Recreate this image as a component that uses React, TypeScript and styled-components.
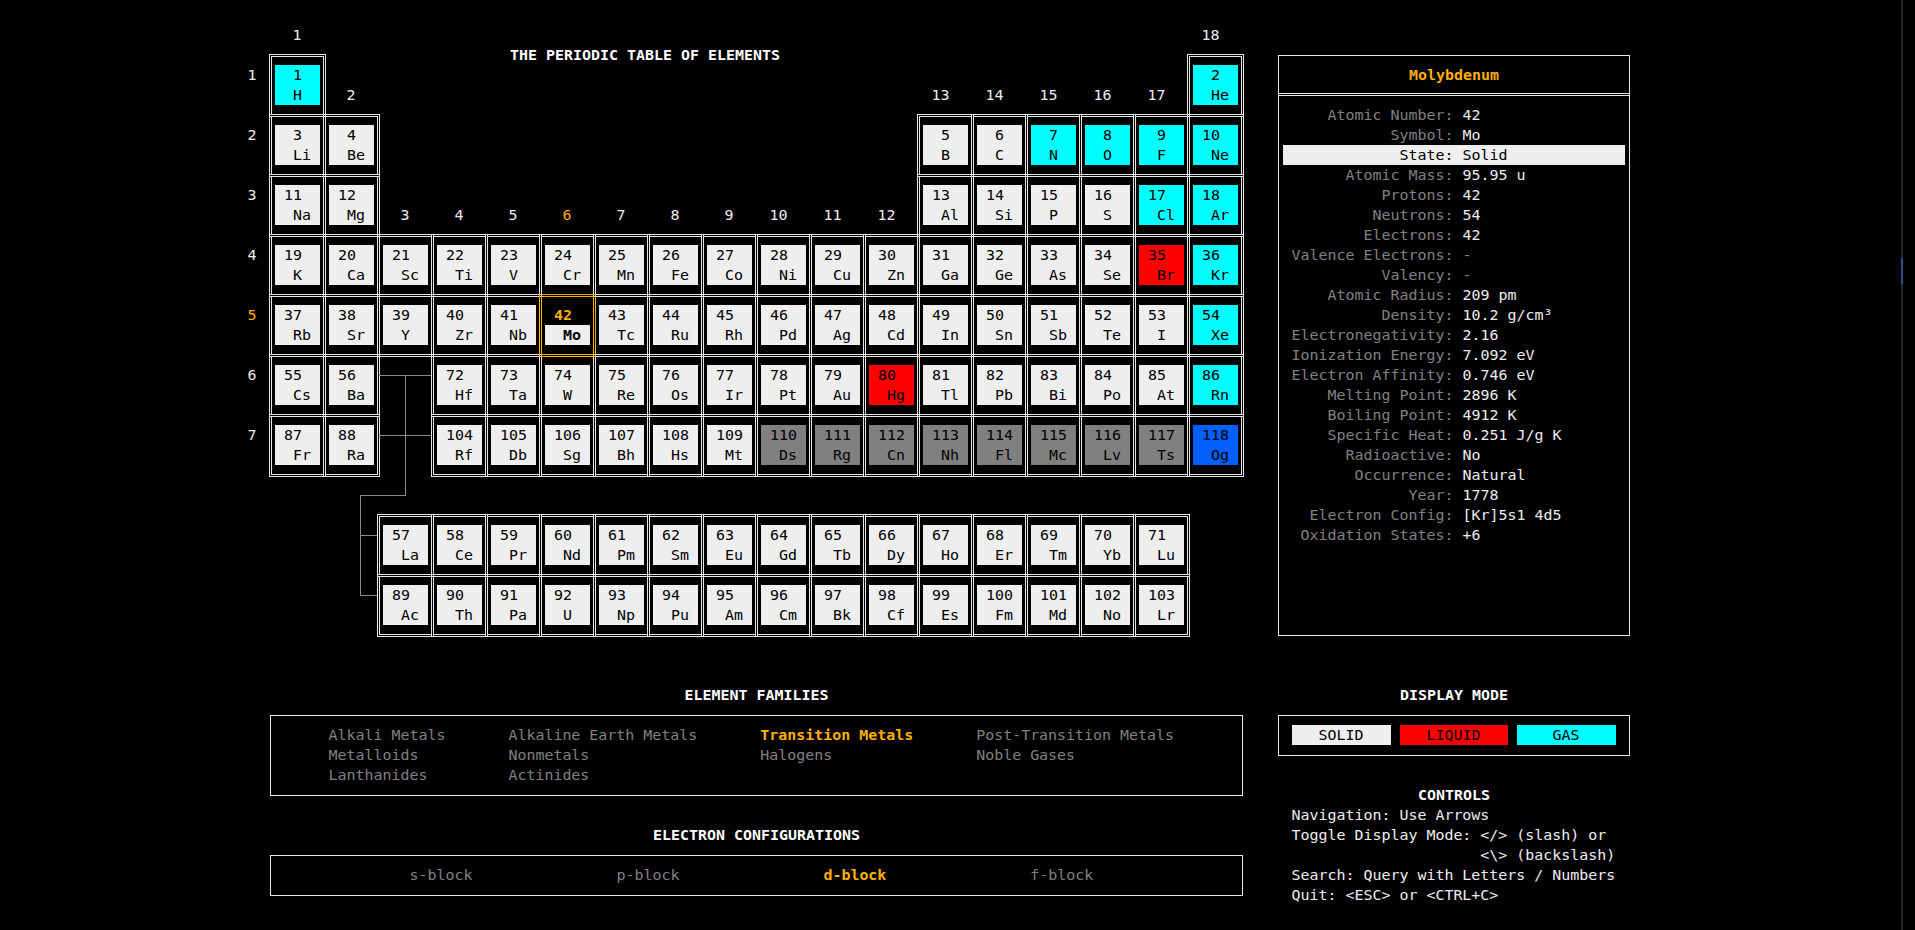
import React from "react";
import styled, { createGlobalStyle } from "styled-components";

const FG = "#eeeeee";
const DIM = "#808080";
const ACCENT = "#ffaf00";
const LINE = "#e6e6e6";
const WIRE = "#8a8a8a";

const SOLID_BG = "#eeeeee";
const GAS_BG = "#00ffff";
const LIQUID_BG = "#ff0000";
const UNKNOWN_BG = "#808080";
const OG_BG = "#005fff";

const GlobalStyle = createGlobalStyle`
  html, body {
    margin: 0;
    padding: 0;
    background: #000;
  }
  body {
    font-family: "DejaVu Sans Mono", "Liberation Mono", monospace;
    font-size: 14.95px;
    line-height: 20px;
    color: ${FG};
  }
`;

const SYMBOLS = (
  "H He Li Be B C N O F Ne Na Mg Al Si P S Cl Ar K Ca Sc Ti V Cr Mn Fe Co Ni Cu Zn Ga Ge As Se Br Kr " +
  "Rb Sr Y Zr Nb Mo Tc Ru Rh Pd Ag Cd In Sn Sb Te I Xe Cs Ba La Ce Pr Nd Pm Sm Eu Gd Tb Dy Ho Er Tm Yb Lu " +
  "Hf Ta W Re Os Ir Pt Au Hg Tl Pb Bi Po At Rn Fr Ra Ac Th Pa U Np Pu Am Cm Bk Cf Es Fm Md No Lr " +
  "Rf Db Sg Bh Hs Mt Ds Rg Cn Nh Fl Mc Lv Ts Og"
).split(" ");

const GASES = [1, 2, 7, 8, 9, 10, 17, 18, 36, 54, 86];
const LIQUIDS = [35, 80];
const SELECTED = 42;

// grid rows: 1 = header, 2..8 = periods 1..7, 9 = spacer, 10 = lanthanides, 11 = actinides
function place(n: number): { group: number; row: number } {
  if (n >= 57 && n <= 71) return { group: n - 57 + 3, row: 10 };
  if (n >= 89 && n <= 103) return { group: n - 89 + 3, row: 11 };
  if (n <= 2) return { group: n === 1 ? 1 : 18, row: 2 };
  if (n <= 18) {
    const start = n <= 10 ? 3 : 11;
    const i = n - start;
    return { group: i < 2 ? i + 1 : i + 11, row: n <= 10 ? 3 : 4 };
  }
  if (n <= 54) {
    const start = n <= 36 ? 19 : 37;
    return { group: n - start + 1, row: n <= 36 ? 5 : 6 };
  }
  const start = n <= 86 ? 55 : 87;
  const i = n - start;
  return { group: i < 2 ? i + 1 : i - 13, row: n <= 86 ? 7 : 8 };
}

function tileColor(n: number) {
  if (n === 118) return OG_BG;
  if (n >= 110) return UNKNOWN_BG;
  if (GASES.includes(n)) return GAS_BG;
  if (LIQUIDS.includes(n)) return LIQUID_BG;
  return SOLID_BG;
}

const padFloor = (s: string, w: number) => " ".repeat(Math.floor((w - s.length) / 2)) + s;
const padCeil = (s: string, w: number) => " ".repeat(Math.ceil((w - s.length) / 2)) + s;

const GROUP_ROW: Record<number, number> = { 1: 1, 18: 1, 2: 2, 13: 2, 14: 2, 15: 2, 16: 2, 17: 2 };

const Screen = styled.div`
  width: 1915px;
  height: 930px;
  overflow: hidden;
  display: flex;
  background: #000;
`;

const Workspace = styled.main`
  display: flex;
  align-items: flex-start;
  gap: 34px;
  padding: 25px 0 0 247px;
`;

const LeftColumn = styled.div`
  display: flex;
  flex-direction: column;
`;

const RightColumn = styled.aside`
  display: flex;
  flex-direction: column;
  width: 352px;
  margin-top: 30px;
`;

const TableGrid = styled.div`
  position: relative;
  display: grid;
  grid-template-columns: 22px repeat(18, 54px) 3px;
  grid-template-rows: 29px repeat(7, 60px) 40px 60px 60px 3px;
`;

const Cell = styled.div<{ $col: number; $row: number; $selected?: boolean }>`
  grid-column: ${(p) => p.$col};
  grid-row: ${(p) => p.$row};
  width: 57px;
  height: 63px;
  box-sizing: border-box;
  border: 3px double ${(p) => (p.$selected ? ACCENT : LINE)};
  padding: 8px 0 0 3px;
  z-index: ${(p) => (p.$selected ? 1 : 0)};
`;

const Tile = styled.div<{ $bg: string }>`
  width: 45px;
  height: 40px;
  background: ${(p) => p.$bg};
  color: #000;
  white-space: pre;
`;

const TileLine = styled.div<{ $selected?: boolean; $number?: boolean }>`
  height: 20px;
  font-weight: ${(p) => (p.$selected ? "bold" : "normal")};
  background: ${(p) => (p.$selected && p.$number ? "#000" : "transparent")};
  color: ${(p) => (p.$selected && p.$number ? ACCENT : "#000")};
`;

const GroupLabel = styled.div<{ $col: number; $row: number; $active?: boolean }>`
  grid-column: ${(p) => p.$col};
  grid-row: ${(p) => p.$row};
  align-self: end;
  height: 20px;
  margin: 0 0 9px -3.5px;
  white-space: pre;
  color: ${(p) => (p.$active ? ACCENT : FG)};
`;

const PeriodLabel = styled.div<{ $row: number; $active?: boolean }>`
  grid-column: 1;
  grid-row: ${(p) => p.$row};
  padding: 11px 0 0 0.5px;
  color: ${(p) => (p.$active ? ACCENT : FG)};
`;

const TableTitle = styled.h1`
  grid-column: 4 / 14;
  grid-row: 2;
  align-self: start;
  margin: -9px 0 0 -4px;
  font-size: inherit;
  line-height: 20px;
  font-weight: bold;
  text-align: center;
  color: #fff;
`;

const Wires = styled.svg`
  position: absolute;
  top: 0;
  left: 0;
  pointer-events: none;
`;

const SectionTitle = styled.h2<{ $top: number; $bottom?: number }>`
  margin: ${(p) => p.$top}px 0 ${(p) => p.$bottom ?? 10}px;
  font-size: inherit;
  line-height: 20px;
  font-weight: bold;
  text-align: center;
  color: #fff;
`;

const LegendBlock = styled.section`
  margin-left: 23px;
  width: 973px;
  display: flex;
  flex-direction: column;
`;

const Frame = styled.div`
  border: 1px solid ${LINE};
  padding: 9px 0 10px;
`;

const FamilyGrid = styled.div`
  display: grid;
  grid-template-columns: repeat(4, max-content);
  column-gap: 63px;
  padding-left: 57.5px;
`;

const BlockRow = styled.div`
  display: flex;
  gap: 144px;
  padding-left: 138.5px;
`;

const LegendItem = styled.span<{ $active?: boolean }>`
  white-space: pre;
  color: ${(p) => (p.$active ? ACCENT : DIM)};
  font-weight: ${(p) => (p.$active ? "bold" : "normal")};
`;

const InfoPanel = styled.section`
  box-sizing: border-box;
  height: 581px;
  border: 1px solid ${LINE};
  display: flex;
  flex-direction: column;
`;

const InfoHeader = styled.div`
  padding: 9px 0 8px;
  text-align: center;
  font-weight: bold;
  color: ${ACCENT};
  border-bottom: 3px double ${LINE};
`;

const InfoRows = styled.div`
  padding: 9px 4.5px 0 3.5px;
`;

const InfoRow = styled.div<{ $highlight?: boolean }>`
  display: grid;
  grid-template-columns: 171px 1fr;
  column-gap: 9px;
  height: 20px;
  white-space: pre;
  background: ${(p) => (p.$highlight ? SOLID_BG : "transparent")};
`;

const InfoKey = styled.span<{ $highlight?: boolean }>`
  text-align: right;
  color: ${(p) => (p.$highlight ? "#000" : DIM)};
`;

const InfoValue = styled.span<{ $highlight?: boolean; $muted?: boolean }>`
  color: ${(p) => (p.$highlight ? "#000" : p.$muted ? DIM : FG)};
`;

const ModeFrame = styled.div`
  border: 1px solid ${LINE};
  padding: 9px 13.5px 10px 12.5px;
  display: flex;
  gap: 9px;
`;

const ModeChip = styled.div<{ $bg: string; $w: number }>`
  width: ${(p) => p.$w}px;
  height: 20px;
  background: ${(p) => p.$bg};
  color: #000;
  text-align: center;
`;

const ControlsText = styled.div`
  padding-left: 13.5px;
  white-space: pre;
  color: ${FG};
`;

const ScrollTrack = styled.div`
  margin-left: auto;
  margin-right: 12px;
  width: 2px;
  background: #262626;
  display: flex;
  flex-direction: column;
`;

const ScrollThumb = styled.div`
  margin-top: 258px;
  height: 26px;
  background: #2d4f86;
`;

const INFO: [string, string, ("hl" | "muted")?][] = [
  ["Atomic Number", "42"],
  ["Symbol", "Mo"],
  ["State", "Solid", "hl"],
  ["Atomic Mass", "95.95 u"],
  ["Protons", "42"],
  ["Neutrons", "54"],
  ["Electrons", "42"],
  ["Valence Electrons", "-", "muted"],
  ["Valency", "-", "muted"],
  ["Atomic Radius", "209 pm"],
  ["Density", "10.2 g/cm³"],
  ["Electronegativity", "2.16"],
  ["Ionization Energy", "7.092 eV"],
  ["Electron Affinity", "0.746 eV"],
  ["Melting Point", "2896 K"],
  ["Boiling Point", "4912 K"],
  ["Specific Heat", "0.251 J/g K"],
  ["Radioactive", "No"],
  ["Occurrence", "Natural"],
  ["Year", "1778"],
  ["Electron Config", "[Kr]5s1 4d5"],
  ["Oxidation States", "+6"],
];

const FAMILIES = [
  "Alkali Metals",
  "Alkaline Earth Metals",
  "Transition Metals",
  "Post-Transition Metals",
  "Metalloids",
  "Nonmetals",
  "Halogens",
  "Noble Gases",
  "Lanthanides",
  "Actinides",
];

const BLOCKS = ["s-block", "p-block", "d-block", "f-block"];

const CONTROLS = [
  "Navigation: Use Arrows",
  "Toggle Display Mode: </> (slash) or",
  "                     <\\> (backslash)",
  "Search: Query with Letters / Numbers",
  "Quit: <ESC> or <CTRL+C>",
];

const ElementCell = ({ n }: { n: number }) => {
  const { group, row } = place(n);
  const selected = n === SELECTED;
  return (
    <Cell $col={group + 1} $row={row} $selected={selected}>
      <Tile $bg={tileColor(n)}>
        <TileLine $selected={selected} $number>
          {padFloor(String(n), 5)}
        </TileLine>
        <TileLine $selected={selected}>{padCeil(SYMBOLS[n - 1], 5)}</TileLine>
      </Tile>
    </Cell>
  );
};

const PeriodicTable = () => {
  const groups = Array.from({ length: 18 }, (_, i) => i + 1);
  return (
    <TableGrid>
      {groups.map((g) => (
        <GroupLabel key={g} $col={g + 1} $row={GROUP_ROW[g] ?? 4} $active={g === 6}>
          {padCeil(String(g), 6)}
        </GroupLabel>
      ))}
      {[1, 2, 3, 4, 5, 6, 7].map((p) => (
        <PeriodLabel key={p} $row={p + 1} $active={p === 5}>
          {p}
        </PeriodLabel>
      ))}
      <TableTitle>THE PERIODIC TABLE OF ELEMENTS</TableTitle>
      {SYMBOLS.map((_, i) => (
        <ElementCell key={i} n={i + 1} />
      ))}
      <Wires width={997} height={612}>
        <g stroke={WIRE} strokeWidth={1} fill="none" shapeRendering="crispEdges">
          <path d="M132 350.5H184M132 410.5H184" />
          <path d="M158.5 350V471M158.5 470.5H113M113.5 470V571" />
          <path d="M113 510.5H130M113 570.5H130" />
        </g>
      </Wires>
    </TableGrid>
  );
};

const InfoCard = () => (
  <InfoPanel>
    <InfoHeader>Molybdenum</InfoHeader>
    <InfoRows>
      {INFO.map(([k, v, flag]) => (
        <InfoRow key={k} $highlight={flag === "hl"}>
          <InfoKey $highlight={flag === "hl"}>{k}:</InfoKey>
          <InfoValue $highlight={flag === "hl"} $muted={flag === "muted"}>
            {v}
          </InfoValue>
        </InfoRow>
      ))}
    </InfoRows>
  </InfoPanel>
);

export default function App() {
  return (
    <Screen>
      <GlobalStyle />
      <Workspace>
        <LeftColumn>
          <PeriodicTable />
          <LegendBlock>
            <SectionTitle $top={48}>ELEMENT FAMILIES</SectionTitle>
            <Frame>
              <FamilyGrid>
                {FAMILIES.map((f) => (
                  <LegendItem key={f} $active={f === "Transition Metals"}>
                    {f}
                  </LegendItem>
                ))}
              </FamilyGrid>
            </Frame>
            <SectionTitle $top={29}>ELECTRON CONFIGURATIONS</SectionTitle>
            <Frame>
              <BlockRow>
                {BLOCKS.map((b) => (
                  <LegendItem key={b} $active={b === "d-block"}>
                    {b}
                  </LegendItem>
                ))}
              </BlockRow>
            </Frame>
          </LegendBlock>
        </LeftColumn>
        <RightColumn>
          <InfoCard />
          <SectionTitle $top={49}>DISPLAY MODE</SectionTitle>
          <ModeFrame>
            <ModeChip $bg={SOLID_BG} $w={99}>SOLID</ModeChip>
            <ModeChip $bg={LIQUID_BG} $w={108}>LIQUID</ModeChip>
            <ModeChip $bg={GAS_BG} $w={99}>GAS</ModeChip>
          </ModeFrame>
          <SectionTitle $top={29} $bottom={0}>
            CONTROLS
          </SectionTitle>
          <ControlsText>
            {CONTROLS.map((c) => (
              <div key={c}>{c}</div>
            ))}
          </ControlsText>
        </RightColumn>
      </Workspace>
      <ScrollTrack>
        <ScrollThumb />
      </ScrollTrack>
    </Screen>
  );
}
